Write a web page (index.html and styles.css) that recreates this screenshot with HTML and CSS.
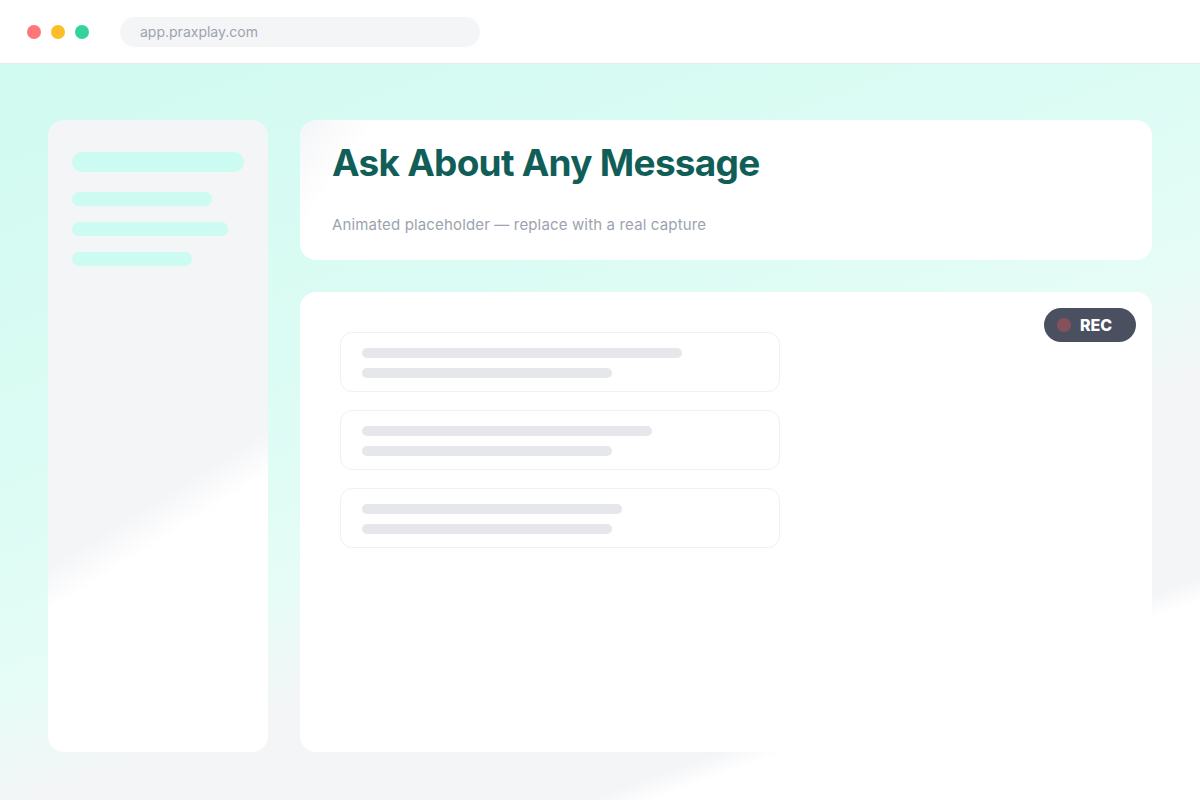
FILE: index.html
```html
<!DOCTYPE html>
<html lang="en">
<head>
    <meta charset="UTF-8">
    <meta name="viewport" content="width=device-width, initial-scale=1.0">
    <title>Ask About Any Message</title>
    <link rel="stylesheet" href="styles.css">
</head>
<body>
    <header class="chrome">
        <div class="lights">
            <span class="light red"></span>
            <span class="light yellow"></span>
            <span class="light green"></span>
        </div>
        <div class="address">app.praxplay.com</div>
    </header>

    <main class="stage">
        <aside class="sidebar">
            <div class="bar bar-title"></div>
            <div class="bar" style="width: 140px"></div>
            <div class="bar" style="width: 156px"></div>
            <div class="bar" style="width: 120px"></div>
        </aside>

        <div class="content">
            <section class="intro">
                <h1>Ask About Any Message</h1>
                <p>Animated placeholder — replace with a real capture</p>
            </section>

            <section class="thread">
                <div class="rec"><span class="rec-dot"></span>REC</div>

                <div class="message">
                    <div class="line" style="width: 320px"></div>
                    <div class="line" style="width: 250px"></div>
                </div>
                <div class="message">
                    <div class="line" style="width: 290px"></div>
                    <div class="line" style="width: 250px"></div>
                </div>
                <div class="message">
                    <div class="line" style="width: 260px"></div>
                    <div class="line" style="width: 250px"></div>
                </div>
            </section>
        </div>
    </main>
</body>
</html>
```

FILE: styles.css
```css
* {
    box-sizing: border-box;
}
body {
    font-family: Inter, 'Noto Sans', sans-serif;
    margin: 0;
    padding: 0;
    background: #fff;
    color: #333;
}

/* browser window bar */
.chrome {
    height: 64px;
    display: flex;
    align-items: center;
    gap: 31px;
    padding: 0 27px;
    background: #fff;
    border-bottom: 1px solid #e8eaed;
}
.lights {
    display: flex;
    gap: 10px;
}
.light {
    width: 14px;
    height: 14px;
    border-radius: 50%;
}
.red { background: #fe7676; }
.yellow { background: #fdbd29; }
.green { background: #34d399; }
.address {
    width: 360px;
    height: 30px;
    padding-left: 20px;
    border-radius: 15px;
    background: #f4f5f7;
    color: #9ca3af;
    font-size: 14px;
    line-height: 30px;
}

/* page behind the cards */
.stage {
    height: 736px;
    display: grid;
    grid-template-columns: 220px 1fr;
    gap: 32px;
    padding: 56px 48px 48px;
    background: linear-gradient(160deg, #d1faf0 0%, #dcfcf4 38%, #e6fcf7 54%, #f4f5f7 64%, #f4f5f7 81%, #fff 83%, #fff 100%);
}

.sidebar {
    display: flex;
    flex-direction: column;
    gap: 16px;
    padding: 32px 24px;
    border-radius: 16px;
    background: linear-gradient(148deg, #f4f5f7 58%, #fff 64%);
}
.bar {
    height: 14px;
    border-radius: 7px;
    background: #ccfbf1;
}
.bar-title {
    width: 172px;
    height: 20px;
    border-radius: 10px;
    margin-bottom: 4px;
}

.content {
    display: grid;
    grid-template-rows: 140px 1fr;
    gap: 32px;
}
.intro {
    padding: 20px 32px;
    border-radius: 16px;
    background: linear-gradient(125deg, #f4f5f7 0%, #fff 8%);
}
.intro h1 {
    margin: 0;
    font-size: 37px;
    font-weight: 700;
    letter-spacing: -0.02em;
    color: #115e59;
}
.intro p {
    margin: 30px 0 0;
    font-size: 15px;
    letter-spacing: 0.01em;
    color: #9ca3af;
}

.thread {
    position: relative;
    display: flex;
    flex-direction: column;
    gap: 18px;
    padding: 40px;
    border-radius: 16px;
    background: #fff;
}
.rec {
    position: absolute;
    top: 16px;
    right: 16px;
    height: 34px;
    width: 92px;
    display: flex;
    align-items: center;
    gap: 9px;
    padding-left: 13px;
    border-radius: 17px;
    background: #4b5060;
    color: #fff;
    font-size: 16px;
    font-weight: 800;
}
.rec-dot {
    width: 14px;
    height: 14px;
    border-radius: 50%;
    background: #85525c;
}
.message {
    width: 440px;
    height: 60px;
    display: flex;
    flex-direction: column;
    gap: 10px;
    padding: 15px 21px 13px;
    border: 1px solid #f0f1f3;
    border-radius: 12px;
}
.line {
    height: 10px;
    border-radius: 5px;
    background: #e5e7eb;
}
```
